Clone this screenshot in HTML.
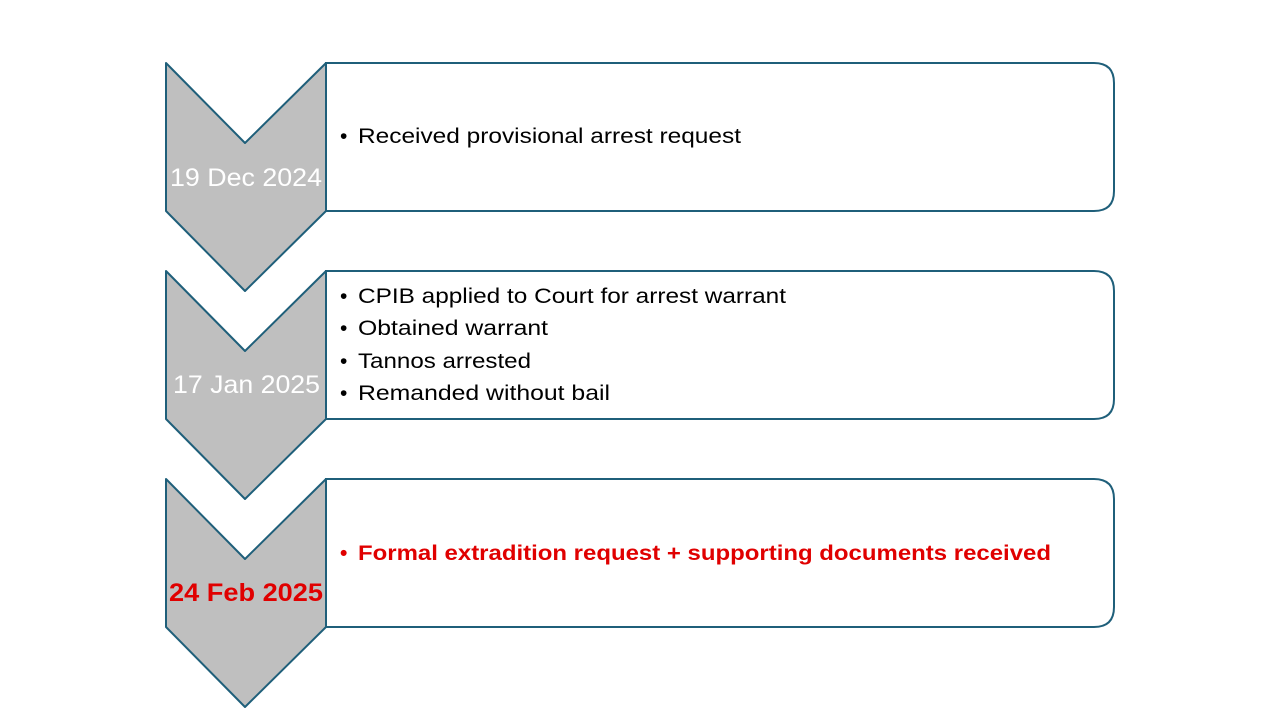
<!DOCTYPE html>
<html><head><style>html,body{margin:0;padding:0;background:#fff;width:1280px;height:720px;overflow:hidden}</style></head>
<body>
<svg width="1280" height="720" viewBox="0 0 1280 720" xmlns="http://www.w3.org/2000/svg" font-family="Liberation Sans, sans-serif">
<g stroke="#1f5f7a" stroke-width="2">
<path d="M326,63 H1094 Q1114,63 1114,83 V191 Q1114,211 1094,211 H326 Z" fill="#fff"/>
<path d="M166,63 L245,143 L326,63 V211 L245,291 L166,211 Z" fill="#bfbfbf" stroke-linejoin="round"/>
<path d="M326,271 H1094 Q1114,271 1114,291 V399 Q1114,419 1094,419 H326 Z" fill="#fff"/>
<path d="M166,271 L245,351 L326,271 V419 L245,499 L166,419 Z" fill="#bfbfbf" stroke-linejoin="round"/>
<path d="M326,479 H1094 Q1114,479 1114,499 V607 Q1114,627 1094,627 H326 Z" fill="#fff"/>
<path d="M166,479 L245,559 L326,479 V627 L245,707 L166,627 Z" fill="#bfbfbf" stroke-linejoin="round"/>
</g>
<g font-size="25" fill="#fff">
<text x="170" y="186" textLength="152" lengthAdjust="spacingAndGlyphs">19 Dec 2024</text>
<text x="173" y="393" textLength="147" lengthAdjust="spacingAndGlyphs">17 Jan 2025</text>
<text x="169" y="601" fill="#e00000" font-weight="bold" textLength="154" lengthAdjust="spacingAndGlyphs">24 Feb 2025</text>
</g>
<g font-size="21" fill="#000">
<text x="340" y="143">•</text><text x="358" y="143" textLength="383" lengthAdjust="spacingAndGlyphs">Received provisional arrest request</text>
<text x="340" y="303">•</text><text x="358" y="303" textLength="428" lengthAdjust="spacingAndGlyphs">CPIB applied to Court for arrest warrant</text>
<text x="340" y="335">•</text><text x="358" y="335" textLength="190" lengthAdjust="spacingAndGlyphs">Obtained warrant</text>
<text x="340" y="368">•</text><text x="358" y="368" textLength="173" lengthAdjust="spacingAndGlyphs">Tannos arrested</text>
<text x="340" y="400">•</text><text x="358" y="400" textLength="252" lengthAdjust="spacingAndGlyphs">Remanded without bail</text>
<text x="340" y="560" fill="#e00000" font-weight="bold">•</text><text x="358" y="560" fill="#e00000" font-weight="bold" textLength="693" lengthAdjust="spacingAndGlyphs">Formal extradition request + supporting documents received</text>
</g>
</svg>
</body></html>
